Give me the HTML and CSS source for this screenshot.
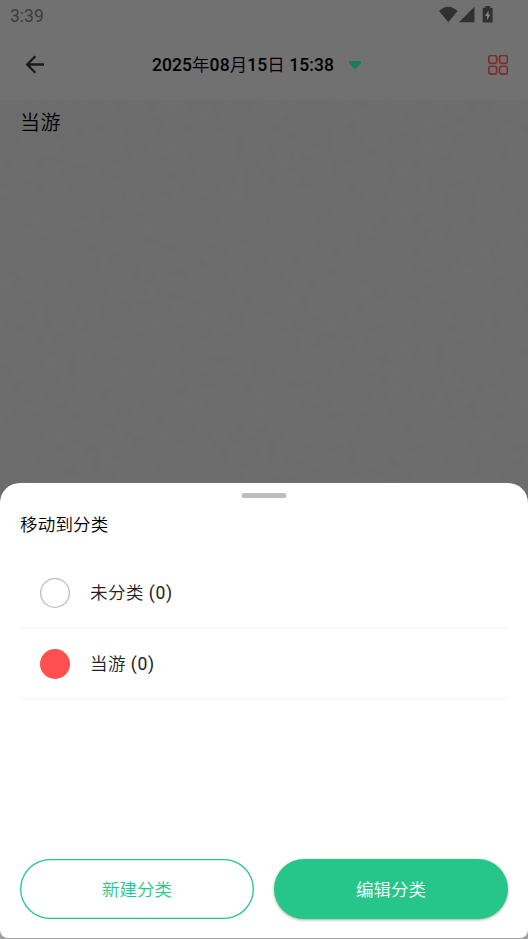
FILE: index.html
```html
<!DOCTYPE html>
<html lang="zh-CN">
<head>
<meta charset="utf-8">
<meta name="viewport" content="width=device-width, initial-scale=1">
<title>移动到分类</title>
<link rel="stylesheet" href="styles.css">
</head>
<body>
<div class="screen">
  <div class="statusbar">
    <span class="clock">3:39</span>
    <svg class="status-icons" width="56" height="18" viewBox="0 0 56 18" fill="#303030">
      <path d="M0 5Q9.300-3.500 18.600 5L9.300 16.300Z"/>
      <path d="M20 16.300L35.500 .8V16.300Z"/>
      <path d="M46.500 0h4.600v1.800h1.700a.8.8 0 0 1 .8.8v13a1 1 0 0 1-1 1h-7.900a1 1 0 0 1-1-1v-13a.8.8 0 0 1 .8-.8h2z"/>
      <path fill="#858585" d="M49.500 4.500L46.100 10h2V14.200L51.400 8.600h-1.900z"/>
    </svg>
  </div>
  <header class="topbar">
    <svg class="back" width="20" height="20" viewBox="0 0 20 20" fill="none" stroke="#1a1a1a" stroke-width="2.300"><path d="M19 9.500H2.500M10.300 1.300L2.200 9.500l8.100 8.200"/></svg>
    <div class="date"><span class="stamp">2025<span class="unit">年</span>08<span class="unit">月</span>15<span class="unit">日</span> 15:38</span>
      <svg width="14" height="10" viewBox="0 0 14 10"><path fill="#187d58" d="M2 1h10c1.500 0 1.700 1.600.8 2.500L8.700 7.900c-1 1-2.400 1-3.400 0L1.200 3.500C.3 2.600.5 1 2 1z"/></svg>
    </div>
    <svg class="grid" width="20" height="20" viewBox="0 0 20 20" fill="none" stroke="#83282b" stroke-width="1.600">
      <rect x=".8" y=".5" width="7.900" height="7.900" rx="2.300"/><rect x="11.500" y=".5" width="7.900" height="7.900" rx="2.300"/>
      <rect x=".8" y="11.200" width="7.900" height="7.900" rx="2.300"/><rect x="11.500" y="11.200" width="7.900" height="7.900" rx="2.300"/>
    </svg>
  </header>
  <main class="note">
    <svg class="paper" width="528" height="400" aria-hidden="true">
      <filter id="grain"><feTurbulence type="fractalNoise" baseFrequency=".09" numOctaves="2" seed="4"/><feColorMatrix type="saturate" values="0"/><feComponentTransfer><feFuncA type="linear" slope="0" intercept="1"/></feComponentTransfer></filter>
      <rect width="528" height="400" filter="url(#grain)"/>
    </svg>
    <p>当游</p>
  </main>
  <section class="sheet">
    <div class="handle"></div>
    <h1>移动到分类</h1>
    <ul>
      <li><i class="dot"></i><span>未分类 <span class="count">(0)</span></span></li>
      <li><i class="dot red"></i><span>当游 <span class="count">(0)</span></span></li>
    </ul>
    <div class="actions">
      <button class="create">新建分类</button>
      <button class="edit">编辑分类</button>
    </div>
  </section>
</div>
</body>
</html>
```
FILE: styles.css
```css
* { box-sizing: border-box; }
body, p, h1, ul { margin: 0; padding: 0; }
body { background: #a0a0a0; font-family: Roboto, "Noto Sans CJK SC", sans-serif; }
.screen { height: 939px; display: flex; flex-direction: column; overflow: hidden; background: linear-gradient(#717171 0 800px, #a0a0a0 800px); }
.statusbar { height: 30px; padding: 0 33px 0 10px; display: flex; justify-content: space-between; align-items: flex-start; }
.clock { font-size: 17.5px; line-height: 33px; color: #3c3c3c; }
.status-icons { margin-top: 6px; }
.topbar { height: 70px; padding: 0 20px 0 25px; display: flex; align-items: center; justify-content: space-between; }
.date { display: flex; align-items: center; gap: 14px; margin-left: -19px; font-size: 17.5px; line-height: 26px; font-weight: 500; color: #000; white-space: pre; }
.stamp { letter-spacing: .07px; }
.unit { font-weight: 350; }
.note { position: relative; height: 405px; background: #6b6b6b; padding: 8px 20px; }
.paper { position: absolute; inset: 0; opacity: .025; }
.note p { position: relative; font-size: 20px; line-height: 30px; letter-spacing: .4px; font-weight: 350; color: #000; }
.sheet { position: relative; flex: none; height: 455px; margin-top: -22px; border-radius: 20px 20px 8px 8px; background: #fff; padding: 9.5px 20px 0; display: flex; flex-direction: column; }
.handle { width: 45px; height: 5px; border-radius: 3px; background: #bdbdbd; align-self: center; transform: translateX(-.5px); }
h1 { margin-top: 14.5px; font-size: 17.5px; line-height: 26px; font-weight: 350; letter-spacing: .2px; color: #000; }
ul { list-style: none; margin-top: 19px; }
li { height: 71px; padding-left: 20px; display: flex; align-items: center; gap: 20px; border-bottom: 2px solid #f8f8f8; font-size: 17.5px; line-height: 26px; letter-spacing: .5px; font-weight: 350; color: #212121; }
li:first-child { height: 72px; padding-top: 1px; }
.count { font-weight: 400; letter-spacing: .75px; }
.dot { width: 30px; height: 30px; border-radius: 50%; box-shadow: inset 0 0 0 1.300px #bdbdbd; }
.dot.red { background: #ff4f4f; box-shadow: none; }
.actions { display: flex; gap: 20px; margin-top: auto; margin-bottom: 19px; }
button { flex: 1; height: 60px; border-radius: 30px; font: 350 17.5px/26px Roboto, "Noto Sans CJK SC", sans-serif; padding: 1px 0 0; }
.create { background: #fff; border: 0; box-shadow: inset 0 0 0 1.300px #26c68a; color: #26c68a; }
.edit { background: #26c68a; border: 0; color: #fff; box-shadow: 0 1px 3px rgba(0,0,0,.35); }
```
